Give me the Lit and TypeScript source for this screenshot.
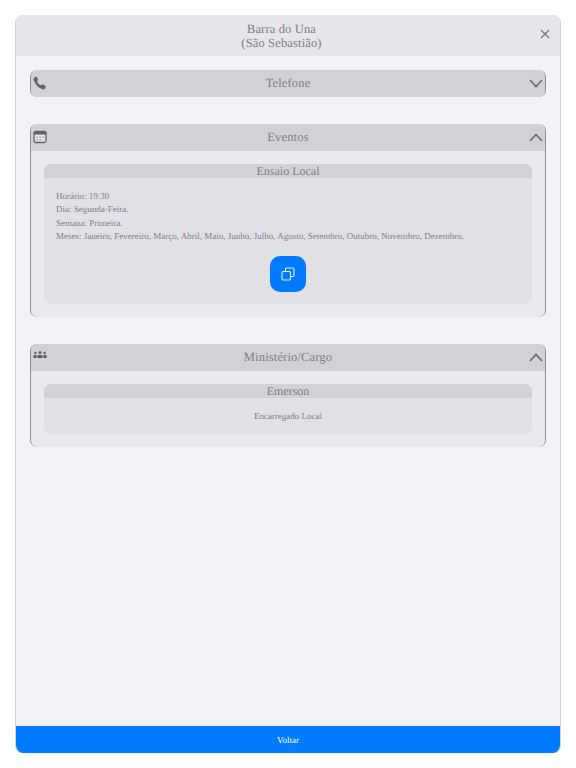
import { LitElement, html, css, svg } from 'lit';
import { customElement, property } from 'lit/decorators.js';

const chevronDown = svg`<path d="M1 1 L7 7.5 L13 1" />`;
const chevronUp = svg`<path d="M1 8 L7 1.5 L13 8" />`;

@customElement('info-section')
export class InfoSection extends LitElement {
  @property({ type: String }) heading = '';
  @property({ type: Boolean }) open = false;

  static styles = css`
    :host {
      display: block;
    }

    .section {
      border-left: 1px solid #8e8e93;
      border-right: 1px solid #8e8e93;
      border-radius: 7px;
      background: #e9e9ee;
      overflow: hidden;
    }

    .bar {
      height: 26.8px;
      background: #d1d1d6;
      display: flex;
      align-items: center;
      justify-content: center;
      position: relative;
      font-size: 12.5px;
      letter-spacing: 0.15px;
      color: #7e7e83;
    }

    .icon {
      position: absolute;
      left: 2px;
      top: 6px;
      width: 14px;
      height: 14px;
      display: flex;
    }

    .chevron {
      position: absolute;
      right: 2px;
      top: 9px;
      width: 14px;
      height: 10px;
      fill: none;
      stroke: #6d6d72;
      stroke-width: 1.8;
    }

    .content {
      padding: 13px 13px 12.6px;
    }
  `;

  render() {
    return html`
      <div class="section">
        <div class="bar">
          <span class="icon"><slot name="icon"></slot></span>
          ${this.heading}
          <svg class="chevron" viewBox="0 0 14 10">${this.open ? chevronUp : chevronDown}</svg>
        </div>
        ${this.open ? html`<div class="content"><slot></slot></div>` : ''}
      </div>
    `;
  }
}

@customElement('app-root')
export class AppRoot extends LitElement {
  static styles = css`
    :host {
      display: block;
      height: 768px;
      background: #fff;
      padding: 15px;
      box-sizing: border-box;
      font-family: 'Liberation Serif', serif;
      text-rendering: geometricPrecision;
      color: #7e7e83;
    }

    .modal {
      height: 738px;
      box-sizing: border-box;
      border-left: 1px solid #d1d1d6;
      border-right: 1px solid #d1d1d6;
      border-radius: 8px;
      overflow: hidden;
      background: #f2f2f7;
      display: flex;
      flex-direction: column;
    }

    header {
      height: 41px;
      flex: none;
      background: #e5e5ea;
      display: flex;
      align-items: center;
      justify-content: center;
      position: relative;
      padding-right: 13px;
      text-align: center;
      font-size: 12.5px;
      letter-spacing: 0.15px;
      line-height: 14px;
      color: #7e7e83;
    }

    .close {
      position: absolute;
      right: 10px;
      top: 14px;
      width: 10px;
      height: 10px;
      stroke: #77777c;
      stroke-width: 1.2;
    }

    main {
      flex: 1;
      padding: 14px 14px 0;
      display: flex;
      flex-direction: column;
      gap: 27.4px;
    }

    .card {
      background: #e0e0e5;
      border-radius: 7px;
      overflow: hidden;
    }

    .card-head {
      height: 14px;
      line-height: 14px;
      background: #d1d1d6;
      text-align: center;
      font-size: 12px;
    }

    .lines {
      padding: 12px 12px 0;
      font-size: 9px;
      line-height: 13.5px;
      color: #828287;
    }

    .copy-row {
      display: flex;
      justify-content: center;
      padding: 12px 0;
    }

    .copy {
      width: 36px;
      height: 36px;
      border-radius: 10px;
      background: #007aff;
      display: flex;
      align-items: center;
      justify-content: center;
    }

    .copy svg {
      width: 14px;
      height: 14px;
      fill: none;
      stroke: #e6f1ff;
      stroke-width: 1.1;
    }

    .role {
      padding: 13px 0 12px;
      text-align: center;
      font-size: 9px;
      line-height: 11.7px;
      color: #828287;
    }

    footer {
      height: 27px;
      flex: none;
      background: #007aff;
      color: #fff;
      display: flex;
      align-items: center;
      justify-content: center;
      font-size: 9px;
    }

    .ic {
      width: 14px;
      height: 14px;
      display: block;
    }
  `;

  render() {
    return html`
      <div class="modal">
        <header>
          <div>Barra do Una<br />(São Sebastião)</div>
          <svg class="close" viewBox="0 0 10 10"><path d="M1 1 L9 9 M9 1 L1 9" /></svg>
        </header>
        <main>
          <info-section heading="Telefone">
            <svg slot="icon" class="ic" viewBox="0 0 14 14" fill="#636366">
              <path d="M1.2 1.6 L3.4 .6 L5.2 3.8 L4 5.2 C4.6 6.9 6.2 8.6 8 9.4 L9.4 8.2 L12.9 10.3 L12.1 12.4 C11.6 13.4 10.2 13.6 8.8 13 C4.9 11.4 2.2 8.2 .8 4.6 C.4 3.4 .5 2.3 1.2 1.6 Z" />
            </svg>
          </info-section>

          <info-section heading="Eventos" open>
            <svg slot="icon" class="ic" viewBox="0 0 14 14">
              <rect x="1" y="1.5" width="12" height="11" rx="1.5" fill="#e0e0e5" stroke="#636366" stroke-width="1.3" />
              <rect x="1" y="1.5" width="12" height="3" fill="#636366" />
              <path d="M3.5 7h1.5M6.5 7h1.5M9.5 7h1.5M3.5 9.8h1.5M6.5 9.8h1.5" stroke="#9a9a9f" stroke-width="1" />
            </svg>
            <div class="card">
              <div class="card-head">Ensaio Local</div>
              <div class="lines">
                Horário: 19:30<br />
                Dia: Segunda-Feira.<br />
                Semana: Primeira.<br />
                Meses: Janeiro, Fevereiro, Março, Abril, Maio, Junho, Julho, Agosto, Setembro, Outubro, Novembro, Dezembro.
              </div>
              <div class="copy-row">
                <div class="copy">
                  <svg viewBox="0 0 14 14">
                    <rect x="1" y="4.5" width="8.5" height="8.5" rx="1.2" />
                    <path d="M4.5 4.5 V2.2 C4.5 1.5 5 1 5.7 1 H11.8 C12.5 1 13 1.5 13 2.2 V8.3 C13 9 12.5 9.5 11.8 9.5 H9.5" />
                  </svg>
                </div>
              </div>
            </div>
          </info-section>

          <info-section heading="Ministério/Cargo" open>
            <svg slot="icon" class="ic" viewBox="0 0 14 14" fill="#636366">
              <circle cx="7" cy="2.6" r="1.5" />
              <circle cx="2.4" cy="3" r="1.2" />
              <circle cx="11.6" cy="3" r="1.2" />
              <path d="M4.4 8 V6.2 C4.4 5.4 5 4.9 6 4.9 H8 C9 4.9 9.6 5.4 9.6 6.2 V8 Z" />
              <path d="M.4 8 V6.2 C.4 5.5 1 5 1.6 5 H3.6 V8 Z" />
              <path d="M13.6 8 V6.2 C13.6 5.5 13 5 12.4 5 H10.4 V8 Z" />
            </svg>
            <div class="card">
              <div class="card-head">Emerson</div>
              <div class="role">Encarregado Local</div>
            </div>
          </info-section>
        </main>
        <footer>Voltar</footer>
      </div>
    `;
  }
}
